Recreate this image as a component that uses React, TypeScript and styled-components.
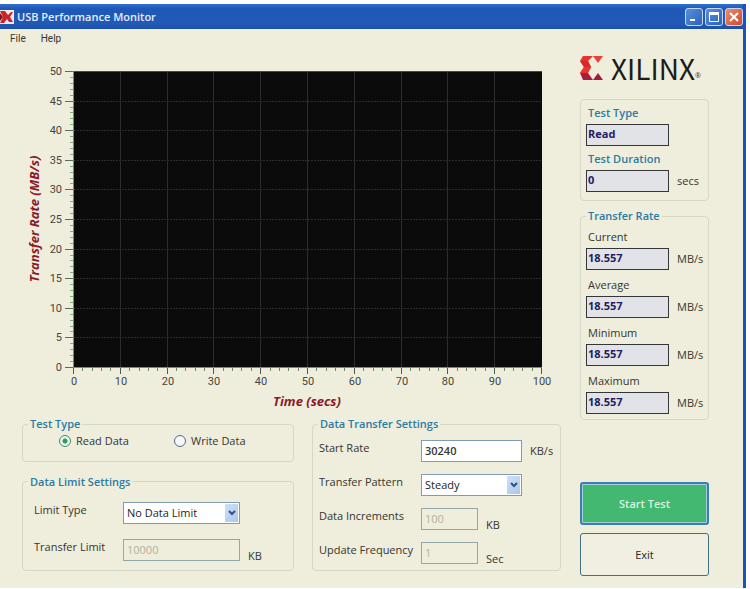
import React, { useState } from 'react'
import styled, { createGlobalStyle } from 'styled-components'

const Y_MAX = 50
const X_MAX = 100
const PLOT = { left: 74, top: 19, width: 468, height: 296 }

const range = (from: number, to: number, step: number) => {
    const out: number[] = []
    for (let v = from; v <= to; v += step) out.push(v)
    return out
}

const xPos = (v: number) => Math.round(PLOT.left + (v / X_MAX) * PLOT.width)
const yPos = (v: number) =>
    Math.round(PLOT.top + PLOT.height - (v / Y_MAX) * PLOT.height)

const Chart = () => {
    const bottom = PLOT.top + PLOT.height
    return (
        <ChartSvg
            viewBox="0 0 561 364"
            role="img"
            aria-label="Transfer rate over time"
        >
            <rect
                x={PLOT.left}
                y={PLOT.top}
                width={PLOT.width}
                height={PLOT.height}
                fill="#0a0b0a"
            />
            <g shapeRendering="crispEdges">
                {range(10, 90, 10).map((v) => (
                    <path
                        key={v}
                        d={`M${xPos(v) - 0.5} ${PLOT.top}V${bottom}`}
                        stroke="#2b2e2b"
                    />
                ))}
                {range(5, 45, 5).map((v) => (
                    <path
                        key={v}
                        d={`M${PLOT.left} ${yPos(v) + 0.5}h${PLOT.width}`}
                        stroke="#292c29"
                        strokeDasharray="2 1"
                    />
                ))}
                {range(0, Y_MAX, 1).map((v) => (
                    <path
                        key={v}
                        d={`M${v % 5 ? 70 : 65} ${yPos(v) + 0.5}H74`}
                        stroke={v % 5 ? '#7fae7c' : '#55705a'}
                    />
                ))}
                {range(0, X_MAX, 2).map((v) => (
                    <path
                        key={v}
                        d={`M${xPos(v) - 0.5} ${bottom}v${v % 10 ? 4 : 7}`}
                        stroke={v % 10 ? '#6f8a6c' : '#4d5f4f'}
                    />
                ))}
                <path
                    d={`M73.5 ${PLOT.top}V${bottom + 0.5}H${
                        PLOT.left + PLOT.width
                    }`}
                    fill="none"
                    stroke="#4fa552"
                />
                <path
                    d={`M${PLOT.left} ${PLOT.top + 0.5}h${PLOT.width}`}
                    stroke="#2f5a33"
                />
            </g>
            {range(0, Y_MAX, 5).map((v) => (
                <TickText key={v} x={62} y={yPos(v) + 4} textAnchor="end">
                    {v}
                </TickText>
            ))}
            {range(0, X_MAX, 10).map((v) => (
                <TickText
                    key={v}
                    x={xPos(v)}
                    y={bottom + 18}
                    textAnchor="middle"
                >
                    {v}
                </TickText>
            ))}
            <AxisTitle x={307} y={354} textAnchor="middle">
                Time (secs)
            </AxisTitle>
            <AxisTitle
                transform="translate(39 167) rotate(-90)"
                textAnchor="middle"
            >
                Transfer Rate (MB/s)
            </AxisTitle>
        </ChartSvg>
    )
}

const LogoMark = () => (
    <LogoSvg width="24" height="24" viewBox="0 0 24 24" aria-hidden="true">
        <path d="M3 0h10L8 5l3 6-7 0-4-6z" fill="#e4322f" />
        <path d="M0 5l8 0 3 6-3 6-8 0 4-6z" fill="#d9272d" />
        <path d="M0 17l4-6h7l-3 6z" fill="#e8382c" />
        <path d="M0 17h8l5 7H3z" fill="#a81f3b" />
        <path d="M13 0h10l-5 7z" fill="#e8403a" />
        <path d="M13 24l5-7 5 7z" fill="#9c1d3e" />
    </LogoSvg>
)

const AppIcon = () => (
    <LogoSvg width="14" height="14" viewBox="0 0 14 14" aria-hidden="true">
        <rect width="14" height="14" fill="#f7e9ea" />
        <path d="M0 1h5l3 4 3-3 2 0-3 5 3 5H9L7 9l-3 4H0l3-6z" fill="#c9242c" />
        <path d="M0 3l3 4-3 4z" fill="#7c1522" />
    </LogoSvg>
)

const Reading = ({
    id,
    label,
    value,
    unit,
    strong,
}: {
    id: string
    label: string
    value: string
    unit?: string
    strong?: boolean
}) => (
    <ReadingBox>
        <ReadingLabel htmlFor={id} $strong={strong}>
            {label}
        </ReadingLabel>
        <ReadingRow>
            <ReadingInput id={id} value={value} readOnly />
            {unit && <span>{unit}</span>}
        </ReadingRow>
    </ReadingBox>
)

const DropDown = ({
    id,
    options,
    width,
}: {
    id: string
    options: string[]
    width: number
}) => (
    <SelectWrap $width={width}>
        <Select id={id}>
            {options.map((o) => (
                <option key={o}>{o}</option>
            ))}
        </Select>
        <SelectArrow>
            <svg width="8" height="6" viewBox="0 0 8 6">
                <path
                    d="M1 1l3 3 3-3"
                    fill="none"
                    stroke="#34507f"
                    strokeWidth="2"
                />
            </svg>
        </SelectArrow>
    </SelectWrap>
)

const App = () => {
    const [testType, setTestType] = useState('Read')
    const [startRate, setStartRate] = useState('30240')

    return (
        <Window>
            <GlobalStyle />
            <TitleBar>
                <AppIcon />
                <Title>USB Performance Monitor</Title>
                <CaptionButton aria-label="Minimize">
                    <svg width="10" height="10" viewBox="0 0 10 10">
                        <path d="M1 8h5" stroke="#fff" strokeWidth="2" />
                    </svg>
                </CaptionButton>
                <CaptionButton aria-label="Maximize">
                    <svg width="10" height="10" viewBox="0 0 10 10">
                        <path d="M.5 1v8.500h9V1" fill="none" stroke="#fff" />
                        <path d="M0 1.500h10" stroke="#fff" strokeWidth="3" />
                    </svg>
                </CaptionButton>
                <CaptionButton aria-label="Close" $close>
                    <svg width="10" height="10" viewBox="0 0 10 10">
                        <path
                            d="M1 1l8 8M9 1l-8 8"
                            stroke="#fff"
                            strokeWidth="2"
                        />
                    </svg>
                </CaptionButton>
            </TitleBar>
            <MenuBar>
                <MenuItem>File</MenuItem>
                <MenuItem>Help</MenuItem>
            </MenuBar>
            <Content>
                <Main>
                    <Chart />
                    <Settings>
                        <SettingsColumn>
                            <Group>
                                <Legend>Test Type</Legend>
                                <RadioRow>
                                    {['Read', 'Write'].map((t) => (
                                        <RadioLabel key={t}>
                                            <Radio
                                                type="radio"
                                                name="testType"
                                                checked={testType === t}
                                                onChange={() => setTestType(t)}
                                            />
                                            {t} Data
                                        </RadioLabel>
                                    ))}
                                </RadioRow>
                            </Group>
                            <Group>
                                <Legend>Data Limit Settings</Legend>
                                <LimitFields>
                                    <FieldRow>
                                        <FieldLabel
                                            htmlFor="limitType"
                                            $width={89}
                                        >
                                            Limit Type
                                        </FieldLabel>
                                        <DropDown
                                            id="limitType"
                                            options={['No Data Limit']}
                                            width={117}
                                        />
                                    </FieldRow>
                                    <FieldRow>
                                        <FieldLabel
                                            htmlFor="transferLimit"
                                            $width={89}
                                        >
                                            Transfer Limit
                                        </FieldLabel>
                                        <TextInput
                                            id="transferLimit"
                                            defaultValue="10000"
                                            disabled
                                            $width={117}
                                        />
                                        <Unit $low>KB</Unit>
                                    </FieldRow>
                                </LimitFields>
                            </Group>
                        </SettingsColumn>
                        <Group>
                            <Legend>Data Transfer Settings</Legend>
                            <TransferFields>
                                <FieldRow>
                                    <FieldLabel htmlFor="startRate" $width={102}>
                                        Start Rate
                                    </FieldLabel>
                                    <TextInput
                                        id="startRate"
                                        value={startRate}
                                        onChange={(e) =>
                                            setStartRate(e.target.value)
                                        }
                                        $width={101}
                                    />
                                    <Unit>KB/s</Unit>
                                </FieldRow>
                                <FieldRow>
                                    <FieldLabel htmlFor="pattern" $width={102}>
                                        Transfer Pattern
                                    </FieldLabel>
                                    <DropDown
                                        id="pattern"
                                        options={['Steady']}
                                        width={101}
                                    />
                                </FieldRow>
                                <FieldRow>
                                    <FieldLabel
                                        htmlFor="increments"
                                        $width={102}
                                    >
                                        Data Increments
                                    </FieldLabel>
                                    <TextInput
                                        id="increments"
                                        defaultValue="100"
                                        disabled
                                        $width={57}
                                    />
                                    <Unit $low>KB</Unit>
                                </FieldRow>
                                <FieldRow>
                                    <FieldLabel
                                        htmlFor="frequency"
                                        $width={102}
                                    >
                                        Update Frequency
                                    </FieldLabel>
                                    <TextInput
                                        id="frequency"
                                        defaultValue="1"
                                        disabled
                                        $width={57}
                                    />
                                    <Unit $low>Sec</Unit>
                                </FieldRow>
                            </TransferFields>
                        </Group>
                    </Settings>
                </Main>
                <Sidebar>
                    <Logo>
                        <LogoMark />
                        <LogoText>XILINX</LogoText>
                        <LogoReg>®</LogoReg>
                    </Logo>
                    <Status>
                        <Reading
                            id="type"
                            label="Test Type"
                            value="Read"
                            strong
                        />
                        <Reading
                            id="duration"
                            label="Test Duration"
                            value="0"
                            unit="secs"
                            strong
                        />
                    </Status>
                    <Group>
                        <Legend>Transfer Rate</Legend>
                        <Readings>
                            {['Current', 'Average', 'Minimum', 'Maximum'].map(
                                (r) => (
                                    <Reading
                                        key={r}
                                        id={r}
                                        label={r}
                                        value="18.557"
                                        unit="MB/s"
                                    />
                                ),
                            )}
                        </Readings>
                    </Group>
                    <Actions>
                        <ActionButton $primary>Start Test</ActionButton>
                        <ActionButton>Exit</ActionButton>
                    </Actions>
                </Sidebar>
            </Content>
        </Window>
    )
}

export default App

const GlobalStyle = createGlobalStyle`
    * {
        box-sizing: border-box;
    }

    body {
        margin: 0;
        background: #fff;
        font: 11px/16px 'Open Sans', 'Noto Sans', sans-serif;
        color: #34362f;
    }

    button, input, select {
        font: inherit;
    }
`

const Window = styled.div`
    margin: 4px 4px 0 0;
    background: #efeddc;
    border-right: 3px solid #1d4fc4;
`

const TitleBar = styled.header`
    display: flex;
    align-items: center;
    gap: 2px;
    height: 25px;
    background: linear-gradient(#2d6fd0, #1f58b4 20%, #2259b8 80%, #1c4fa6);
`

const Title = styled.h1`
    flex: 1;
    margin: 0;
    padding-left: 1px;
    font-size: 11px;
    font-weight: 600;
    color: #e4eefb;
`

const CaptionButton = styled.button<{ $close?: boolean }>`
    display: grid;
    place-items: center;
    width: 18px;
    height: 18px;
    padding: 0;
    border: 1px solid #c5d8f2;
    border-radius: 3px;
    background: ${({ $close }) =>
        $close
            ? 'linear-gradient(135deg, #e98a70, #d2492b)'
            : 'linear-gradient(135deg, #5a8fdb, #2a62bd)'};
`

const MenuBar = styled.nav`
    display: flex;
    gap: 15px;
    padding: 2px 10px;
`

const MenuItem = styled.button`
    padding: 0;
    border: 0;
    background: none;
    font-family: Roboto, Arial, sans-serif;
    font-size: 10px;
    line-height: 16px;
    color: #34362f;
`

const Content = styled.div`
    display: grid;
    grid-template-columns: minmax(0, 1fr) 129px;
    align-items: start;
    gap: 19px;
    padding: 3px 34px 12px 0;
`

const Main = styled.main``

const ChartSvg = styled.svg`
    display: block;
    width: 100%;
`

const TickText = styled.text`
    font: 11px Roboto, Arial, sans-serif;
    fill: #454740;
`

const AxisTitle = styled.text`
    font: italic 700 13px 'Open Sans', 'Noto Sans', sans-serif;
    fill: #8a1a2c;
`

const Settings = styled.div`
    display: grid;
    grid-template-columns: 272fr 249fr;
    gap: 18px;
    padding-left: 22px;
`

const SettingsColumn = styled.div`
    display: grid;
    gap: 12px;
`

const Group = styled.fieldset`
    min-width: 0;
    margin: 0;
    padding: 0;
    border: 1px solid #d6d7c6;
    border-radius: 4px;
`

const Legend = styled.legend`
    margin-left: 5px;
    padding: 0 2px;
    font-weight: 600;
    color: #2c7ba3;
`

const RadioRow = styled.div`
    display: grid;
    grid-template-columns: 115px 1fr;
    padding: 1px 0 11px 36px;
`

const RadioLabel = styled.label`
    display: flex;
    align-items: center;
    gap: 5px;
`

const Radio = styled.input`
    appearance: none;
    width: 12px;
    height: 12px;
    margin: 0;
    border: 1px solid #56698f;
    border-radius: 50%;
    background: #f6f8f8;

    &:checked {
        border-color: #3f8f70;
        background: radial-gradient(#2f9a63 2px, #eef4ea 3px);
    }
`

const LimitFields = styled.div`
    display: grid;
    grid-auto-rows: 22px;
    gap: 15px;
    padding: 12px 0 9px 11px;
`

const TransferFields = styled.div`
    display: grid;
    grid-auto-rows: 22px;
    gap: 12px;
    padding: 8px 0 6px 6px;
`

const FieldRow = styled.div`
    display: flex;
    align-items: flex-start;
`

const FieldLabel = styled.label<{ $width: number }>`
    flex: 0 0 ${({ $width }) => $width}px;
`

const TextInput = styled.input<{ $width: number }>`
    width: ${({ $width }) => $width}px;
    height: 22px;
    padding: 0 3px 1px;
    border: 1px solid #7f9db0;
    background: #fff;
    font-weight: 600;
    color: #34362f;

    &:disabled {
        border-color: #93a8a8;
        background: transparent;
        font-weight: 400;
        color: #b3b09d;
    }
`

const SelectWrap = styled.div<{ $width: number }>`
    position: relative;
    width: ${({ $width }) => $width}px;
`

const Select = styled.select`
    appearance: none;
    width: 100%;
    height: 22px;
    padding: 0 16px 0 3px;
    border: 1px solid #7f9db0;
    border-radius: 0;
    background: #fff;
    font-weight: 500;
    color: #1c1e20;
`

const SelectArrow = styled.span`
    position: absolute;
    top: 2px;
    right: 2px;
    bottom: 2px;
    display: grid;
    place-items: center;
    width: 13px;
    background: linear-gradient(135deg, #cfe0f6, #a9c8ee);
    pointer-events: none;
`

const Unit = styled.span<{ $low?: boolean }>`
    padding: ${({ $low }) => ($low ? '9px' : '3px')} 0 0 8px;
`

const Sidebar = styled.aside`
    display: flex;
    flex-direction: column;
`

const Logo = styled.div`
    display: flex;
    align-items: center;
    height: 32px;
    margin-bottom: 15px;
`

const LogoSvg = styled.svg`
    flex: none;
`

const LogoText = styled.span`
    margin-left: 7px;
    font: 28px/32px 'Noto Sans CJK SC', sans-serif;
    color: #1c1c1a;
`

const LogoReg = styled.span`
    align-self: flex-end;
    font-size: 7px;
    line-height: 16px;
`

const Status = styled.section`
    display: grid;
    gap: 5px;
    margin-bottom: 7px;
    padding: 5px 0 8px 5px;
    border: 1px solid #d6d7c6;
    border-radius: 4px;
`

const Readings = styled.div`
    display: grid;
    gap: 7px;
    padding: 5px 0 5px 5px;
`

const ReadingBox = styled.div`
    display: grid;
    gap: 3px;
`

const ReadingLabel = styled.label<{ $strong?: boolean }>`
    padding-left: 2px;
    font-weight: ${({ $strong }) => ($strong ? 600 : 400)};
    color: ${({ $strong }) => ($strong ? '#2c7ba3' : '#34362f')};
`

const ReadingRow = styled.div`
    display: flex;
    align-items: center;
    gap: 8px;
`

const ReadingInput = styled.input`
    width: 83px;
    height: 22px;
    padding: 0 1px 3px;
    border: 1px solid #34363c;
    background: #e1e3e6;
    font-weight: 700;
    color: #1f1b66;
`

const Actions = styled.div`
    display: grid;
    gap: 8px;
    margin-top: 62px;
`

const ActionButton = styled.button<{ $primary?: boolean }>`
    height: 43px;
    padding: 0;
    border: ${({ $primary }) =>
        $primary ? '2px solid #3b7fb0' : '1px solid #3f6f80'};
    border-radius: 3px;
    background: ${({ $primary }) => ($primary ? '#43b871' : '#f1efe1')};
    box-shadow: ${({ $primary }) =>
        $primary ? 'inset 0 0 0 1px #a3d0dc' : 'none'};
    font-size: 11px;
    font-weight: ${({ $primary }) => ($primary ? 600 : 400)};
    color: ${({ $primary }) => ($primary ? '#d9f3dd' : '#26282a')};
`
